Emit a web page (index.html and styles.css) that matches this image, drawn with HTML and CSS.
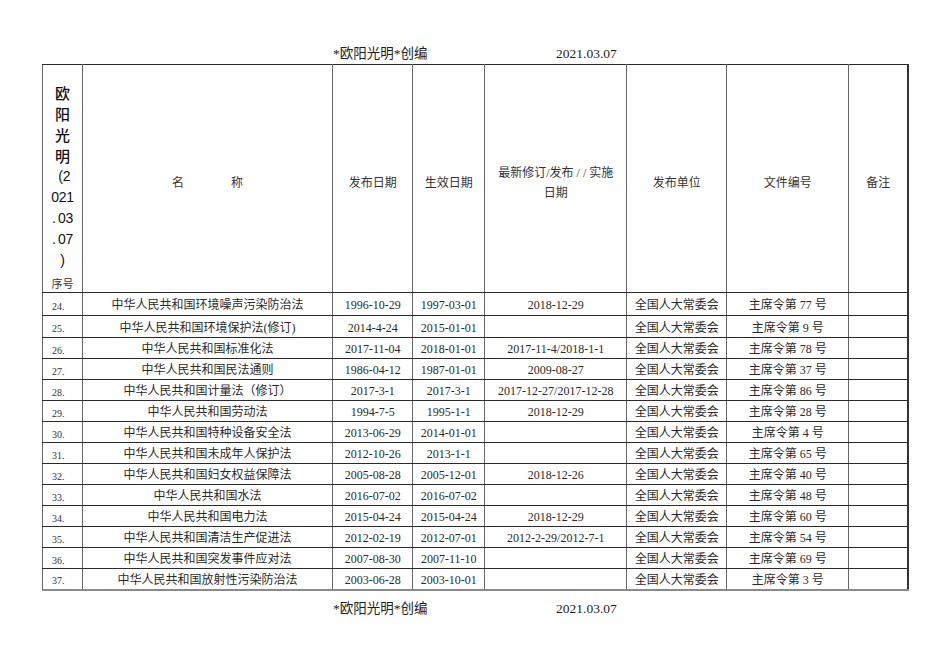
FILE: index.html
```html
<!DOCTYPE html>
<html lang="zh-CN">
<head>
<meta charset="utf-8">
<title>法规清单</title>
<link rel="stylesheet" href="styles.css">
</head>
<body>
<div class="page">
  <div class="doc-line doc-head">
    <span class="author">*欧阳光明*创编</span>
    <span class="date">2021.03.07</span>
  </div>

  <table class="laws">
    <colgroup>
      <col class="c-seq">
      <col class="c-name">
      <col class="c-pub">
      <col class="c-eff">
      <col class="c-rev">
      <col class="c-org">
      <col class="c-doc">
      <col class="c-note">
    </colgroup>
    <thead>
      <tr>
        <th class="seq-head">
          <div class="vt cjk">欧</div>
          <div class="vt cjk">阳</div>
          <div class="vt cjk">光</div>
          <div class="vt cjk">明</div>
          <div class="vt lat">&nbsp;(2</div>
          <div class="vt lat">021</div>
          <div class="vt lat">.&thinsp;03</div>
          <div class="vt lat">.&thinsp;07</div>
          <div class="vt lat">)</div>
          <div class="seq-label">序号</div>
        </th>
        <th class="mid">名<span class="name-gap"></span>称</th>
        <th class="mid">发布日期</th>
        <th class="mid">生效日期</th>
        <th class="mid">最新修订/发布 / / 实施<br>日期</th>
        <th class="mid">发布单位</th>
        <th class="mid">文件编号</th>
        <th class="mid">备注</th>
      </tr>
    </thead>
    <tbody>
      <tr><td class="seq">24.</td><td>中华人民共和国环境噪声污染防治法</td><td>1996-10-29</td><td>1997-03-01</td><td>2018-12-29</td><td>全国人大常委会</td><td>主席令第 77 号</td><td></td></tr>
      <tr><td class="seq">25.</td><td>中华人民共和国环境保护法(修订)</td><td>2014-4-24</td><td>2015-01-01</td><td></td><td>全国人大常委会</td><td>主席令第 9 号</td><td></td></tr>
      <tr><td class="seq">26.</td><td>中华人民共和国标准化法</td><td>2017-11-04</td><td>2018-01-01</td><td>2017-11-4/2018-1-1</td><td>全国人大常委会</td><td>主席令第 78 号</td><td></td></tr>
      <tr><td class="seq">27.</td><td>中华人民共和国民法通则</td><td>1986-04-12</td><td>1987-01-01</td><td>2009-08-27</td><td>全国人大常委会</td><td>主席令第 37 号</td><td></td></tr>
      <tr><td class="seq">28.</td><td>中华人民共和国计量法（修订）</td><td>2017-3-1</td><td>2017-3-1</td><td>2017-12-27/2017-12-28</td><td>全国人大常委会</td><td>主席令第 86 号</td><td></td></tr>
      <tr><td class="seq">29.</td><td>中华人民共和国劳动法</td><td>1994-7-5</td><td>1995-1-1</td><td>2018-12-29</td><td>全国人大常委会</td><td>主席令第 28 号</td><td></td></tr>
      <tr><td class="seq">30.</td><td>中华人民共和国特种设备安全法</td><td>2013-06-29</td><td>2014-01-01</td><td></td><td>全国人大常委会</td><td>主席令第 4 号</td><td></td></tr>
      <tr><td class="seq">31.</td><td>中华人民共和国未成年人保护法</td><td>2012-10-26</td><td>2013-1-1</td><td></td><td>全国人大常委会</td><td>主席令第 65 号</td><td></td></tr>
      <tr><td class="seq">32.</td><td>中华人民共和国妇女权益保障法</td><td>2005-08-28</td><td>2005-12-01</td><td>2018-12-26</td><td>全国人大常委会</td><td>主席令第 40 号</td><td></td></tr>
      <tr><td class="seq">33.</td><td>中华人民共和国水法</td><td>2016-07-02</td><td>2016-07-02</td><td></td><td>全国人大常委会</td><td>主席令第 48 号</td><td></td></tr>
      <tr><td class="seq">34.</td><td>中华人民共和国电力法</td><td>2015-04-24</td><td>2015-04-24</td><td>2018-12-29</td><td>全国人大常委会</td><td>主席令第 60 号</td><td></td></tr>
      <tr><td class="seq">35.</td><td>中华人民共和国清洁生产促进法</td><td>2012-02-19</td><td>2012-07-01</td><td>2012-2-29/2012-7-1</td><td>全国人大常委会</td><td>主席令第 54 号</td><td></td></tr>
      <tr><td class="seq">36.</td><td>中华人民共和国突发事件应对法</td><td>2007-08-30</td><td>2007-11-10</td><td></td><td>全国人大常委会</td><td>主席令第 69 号</td><td></td></tr>
      <tr><td class="seq">37.</td><td>中华人民共和国放射性污染防治法</td><td>2003-06-28</td><td>2003-10-01</td><td></td><td>全国人大常委会</td><td>主席令第 3 号</td><td></td></tr>
    </tbody>
  </table>

  <div class="doc-line doc-foot">
    <span class="author">*欧阳光明*创编</span>
    <span class="date">2021.03.07</span>
  </div>
</div>
</body>
</html>
```

FILE: styles.css
```css
html, body {
  margin: 0;
  padding: 0;
  background: #ffffff;
}

body {
  font-family: "Liberation Serif", "Noto Sans CJK SC", serif;
  color: #2a2a2a;
  width: 950px;
  height: 672px;
  overflow: hidden;
}

.page {
  padding-left: 42px;
}

.doc-line {
  display: flex;
  padding-left: 291px;
  font-size: 13.5px;
  line-height: 16px;
  color: #1e1e1e;
}

.doc-line .author {
  width: 223px;
  flex: none;
}

.doc-head {
  padding-top: 46px;
  margin-bottom: 2px;
}

.doc-foot {
  margin-top: 10px;
}

.laws {
  border-collapse: collapse;
  table-layout: fixed;
  width: 867px;
  border-top: 1px solid #8a8a8a;
  border-left: 1px solid #7a7a7a;
  border-bottom: 2px solid #8a8a8a;
  border-right: 2px solid #333333;
  font-size: 12px;
}

.c-seq { width: 40px; }
.c-name { width: 250px; }
.c-pub { width: 80px; }
.c-eff { width: 72px; }
.c-rev { width: 142px; }
.c-org { width: 100px; }
.c-doc { width: 122px; }
.c-note { width: 59px; }

.laws th,
.laws td {
  border-left: 1px solid #666666;
  border-right: 1px solid #666666;
  border-top: 1px solid #2a2a2a;
  border-bottom: 1px solid #2a2a2a;
  padding: 0;
  text-align: center;
  font-weight: normal;
  white-space: nowrap;
  overflow: hidden;
}

.laws thead tr {
  height: 228px;
}

.laws th.mid {
  vertical-align: middle;
  padding-top: 8px;
  line-height: 20px;
  color: #333333;
}

.name-gap {
  display: inline-block;
  width: 47px;
}

.laws th.seq-head {
  vertical-align: top;
  padding-top: 17px;
}

.vt {
  height: 21px;
  line-height: 21px;
  color: #111111;
}

.vt.cjk {
  font-family: "Noto Sans CJK SC", sans-serif;
  font-size: 15px;
  font-weight: 500;
}

.vt.lat {
  font-family: "Liberation Sans", "Noto Sans CJK SC", sans-serif;
  font-size: 14px;
  letter-spacing: -0.3px;
}

.seq-label {
  margin-top: 5px;
  font-family: "Noto Sans CJK SC", sans-serif;
  font-size: 11px;
  line-height: 14px;
  color: #333333;
}

.laws tbody tr {
  height: 21px;
}

.laws tbody tr:nth-child(1) {
  height: 23px;
}

.laws tbody tr:nth-child(2) {
  height: 22px;
}

.laws td {
  line-height: 14px;
  padding-top: 2px;
  vertical-align: middle;
}

.laws td.seq {
  text-align: left;
  padding-left: 9px;
  padding-top: 5px;
  font-size: 10px;
  color: #333333;
}
```
